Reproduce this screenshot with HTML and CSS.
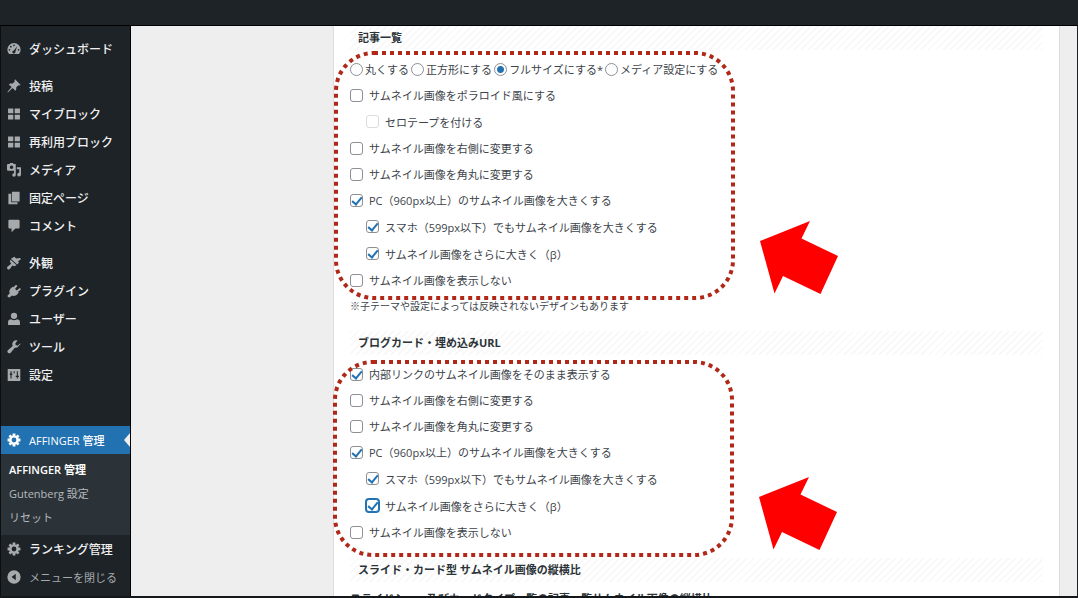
FILE: index.html
```html
<!DOCTYPE html>
<html lang="ja">
<head>
<meta charset="utf-8">
<title>AFFINGER 管理</title>
<link rel="stylesheet" href="styles.css">
</head>
<body>
<header class="topbar"></header>
<div class="shell">
  <nav class="menu">
    <a class="item" href="#"><svg class="icon" viewBox="0 0 20 20"><path fill-rule="evenodd" d="M3 17h14a9.200 9.200 0 0 0 2.500-6A9.500 9.500 0 0 0 .500 11 9.200 9.200 0 0 0 3 17zM10 3.500a1.200 1.200 0 1 1 0 2.400 1.200 1.200 0 0 1 0-2.400zM5.500 5.500a1.200 1.200 0 1 1 0 2.400 1.200 1.200 0 0 1 0-2.400zM3.500 10a1.200 1.200 0 1 1 0 2.400 1.200 1.200 0 0 1 0-2.400zM16.500 10a1.200 1.200 0 1 1 0 2.400 1.200 1.200 0 0 1 0-2.400zM14.600 6l-2.600 7.700a2.200 2.200 0 1 1-2.200-1.600z"/></svg>ダッシュボード</a>
    <hr class="gap">
    <a class="item" href="#"><svg class="icon" viewBox="0 0 20 20"><path d="M11.500.500l8 8-1.800.8-1.400-.3-3.200 3.300c.5 1.800.2 3.400-1.100 4.600L7.900 13 2 18.600l-1.500.900.900-2.100L6.600 11.500 2.500 7.700c1.500-1.200 3.200-1.400 4.900-.9L11 3.800l-.3-1.500z"/></svg>投稿</a>
    <a class="item" href="#"><svg class="icon" viewBox="0 0 20 20"><path d="M1.500 2h7.500v7H1.500zM11 2h7.500v7H11zM1.500 11H9v7H1.500zM11 11h7.500v7H11z"/></svg>マイブロック</a>
    <a class="item" href="#"><svg class="icon" viewBox="0 0 20 20"><path d="M1.500 2h7.500v7H1.500zM11 2h7.500v7H11zM1.500 11H9v7H1.500zM11 11h7.500v7H11z"/></svg>再利用ブロック</a>
    <a class="item" href="#"><svg class="icon" viewBox="0 0 20 20"><path fill-rule="evenodd" d="M1.500 1.500H3.500l1-1.500h4l1 1.500h3V17a2.500 2.500 0 1 1-2.500-2.500V11H1.500A1.500 1.500 0 0 1 0 9.500V3a1.500 1.500 0 0 1 1.500-1.500zM6.500 3.500a2.500 2.500 0 1 0 0 5 2.500 2.500 0 0 0 0-5zM14 6h6v10.500a2.700 2.700 0 1 1-2.500-2.700V9H14z"/></svg>メディア</a>
    <a class="item" href="#"><svg class="icon" viewBox="0 0 20 20"><path d="M7 1h11v14H7zM2 4h4v12h9v3H2z"/></svg>固定ページ</a>
    <a class="item" href="#"><svg class="icon" viewBox="0 0 20 20"><path d="M3.500 1h13A1.500 1.500 0 0 1 18 2.500V12a1.500 1.500 0 0 1-1.500 1.500H12L6.500 19v-5.500h-3A1.500 1.500 0 0 1 2 12V2.500A1.500 1.500 0 0 1 3.500 1z"/></svg>コメント</a>
    <hr class="gap">
    <a class="item" href="#"><svg class="icon" viewBox="0 0 20 20"><path d="M7.500 3l3-2L13 3.500l6-.5.800 1.500L15.800 7.500 17 9.500 14.500 12 5.500 4zM5 5.500l8.500 7.500-2.500 1.500-3.300-.8L4 18.500a2.200 2.200 0 0 1-3.300-3L6 11 4 7.500z"/></svg>外観</a>
    <a class="item" href="#"><svg class="icon" viewBox="0 0 20 20"><path d="M12.500 1.500a1.400 1.400 0 0 1 2 1.800L11.500 7 14 9.200l3.600-3.100a1.400 1.400 0 0 1 1.800 2l-3.600 3.100 1 1-1.200 1.300c-2 3-5.500 4.500-8.500 2.900L4 19H1v-3l2.900-2.300C2.200 10.500 4 7 6.800 5l1.300-1.200 1 1z"/></svg>プラグイン</a>
    <a class="item" href="#"><svg class="icon" viewBox="0 0 20 20"><circle cx="10" cy="5.500" r="4.500"/><path d="M1.500 18.500v-4c0-2.500 2-4 4.500-4 1.800 1.700 6.200 1.700 8 0 2.500 0 4.500 1.500 4.500 4v4z"/></svg>ユーザー</a>
    <a class="item" href="#"><svg class="icon" viewBox="0 0 20 20"><path d="M17.200 8a5.200 5.200 0 0 1-6 3L4.900 18.400a2.600 2.600 0 0 1-3.700-3.600l7-6.400a5.500 5.500 0 0 1 7-7.600L12 4.500l.5 3 3 .5 4-3.500a5.500 5.500 0 0 1-2.300 3.500z"/></svg>ツール</a>
    <a class="item" href="#"><svg class="icon" viewBox="0 0 20 20"><path fill-rule="evenodd" d="M1 1.500h18v17H1zM5 4.500V8H4v2h1v5h1.500v-5h1V8h-1V4.500zM14 4.500V11h-1.500v2H14v2h1.500v-2H17v-2h-1.500V4.500zM9.500 4.500v3h1.500v-3z"/></svg>設定</a>
    <hr class="gap gap-wide">
    <a class="item current" href="#"><svg class="icon" viewBox="0 0 20 20"><path fill-rule="evenodd" d="M19.200 12h-2.700a7 7 0 0 1-.5 1.300l1.800 1.900-2.600 2.600-1.900-1.800a7 7 0 0 1-1.300.5V19.200H8v-2.700a7 7 0 0 1-1.300-.5l-1.900 1.800-2.600-2.600L4 13.300A7 7 0 0 1 3.500 12H.800V8h2.700A7 7 0 0 1 4 6.700L2.200 4.800l2.600-2.600L6.700 4A7 7 0 0 1 8 3.500V.800h4v2.700a7 7 0 0 1 1.300.5l1.900-1.800 2.600 2.600L16 6.700a7 7 0 0 1 .5 1.300h2.700zM10 6.600a3.400 3.400 0 1 0 0 6.800 3.400 3.400 0 0 0 0-6.800z"/></svg>AFFINGER 管理</a>
    <div class="submenu">
      <a class="sub active" href="#">AFFINGER 管理</a>
      <a class="sub" href="#">Gutenberg 設定</a>
      <a class="sub" href="#">リセット</a>
    </div>
    <a class="item" href="#"><svg class="icon" viewBox="0 0 20 20"><path fill-rule="evenodd" d="M19.200 12h-2.700a7 7 0 0 1-.5 1.300l1.800 1.900-2.600 2.600-1.900-1.800a7 7 0 0 1-1.300.5V19.200H8v-2.700a7 7 0 0 1-1.300-.5l-1.900 1.800-2.600-2.600L4 13.300A7 7 0 0 1 3.500 12H.800V8h2.700A7 7 0 0 1 4 6.700L2.200 4.800l2.600-2.600L6.700 4A7 7 0 0 1 8 3.500V.800h4v2.700a7 7 0 0 1 1.300.5l1.900-1.800 2.600 2.600L16 6.700a7 7 0 0 1 .5 1.300h2.700zM10 6.600a3.400 3.400 0 1 0 0 6.800 3.400 3.400 0 0 0 0-6.800z"/></svg>ランキング管理</a>
    <button class="item collapse" type="button"><svg class="icon" viewBox="0 0 20 20"><path fill-rule="evenodd" d="M10 .500a9.500 9.500 0 1 1 0 19 9.500 9.500 0 0 1 0-19zM12.500 5.500L6.500 10l6 4.500z"/></svg>メニューを閉じる</button>
  </nav>
  <main class="content">
    <form class="panel">
      <h2 class="heading">記事一覧</h2>
      <div class="radios">
        <label class="choice"><input type="radio" name="shape">丸くする</label>
        <label class="choice"><input type="radio" name="shape">正方形にする</label>
        <label class="choice"><input type="radio" name="shape" checked>フルサイズにする*</label>
        <label class="choice"><input type="radio" name="shape">メディア設定にする</label>
      </div>
      <label class="row"><input type="checkbox">サムネイル画像をポラロイド風にする</label>
      <label class="row nested"><input type="checkbox" disabled>セロテープを付ける</label>
      <label class="row"><input type="checkbox">サムネイル画像を右側に変更する</label>
      <label class="row"><input type="checkbox">サムネイル画像を角丸に変更する</label>
      <label class="row"><input type="checkbox" checked>PC（960px以上）のサムネイル画像を大きくする</label>
      <label class="row nested"><input type="checkbox" checked>スマホ（599px以下）でもサムネイル画像を大きくする</label>
      <label class="row nested"><input type="checkbox" checked>サムネイル画像をさらに大きく（β）</label>
      <label class="row"><input type="checkbox">サムネイル画像を表示しない</label>
      <p class="note">※子テーマや設定によっては反映されないデザインもあります</p>
      <h2 class="heading">ブログカード・埋め込みURL</h2>
      <div class="group">
        <label class="row"><input type="checkbox" checked>内部リンクのサムネイル画像をそのまま表示する</label>
        <label class="row"><input type="checkbox">サムネイル画像を右側に変更する</label>
        <label class="row"><input type="checkbox">サムネイル画像を角丸に変更する</label>
        <label class="row"><input type="checkbox" checked>PC（960px以上）のサムネイル画像を大きくする</label>
        <label class="row nested"><input type="checkbox" checked>スマホ（599px以下）でもサムネイル画像を大きくする</label>
        <label class="row nested"><input class="focused" type="checkbox" checked>サムネイル画像をさらに大きく（β）</label>
        <label class="row"><input type="checkbox">サムネイル画像を表示しない</label>
      </div>
      <h2 class="heading">スライド・カード型 サムネイル画像の縦横比</h2>
      <p class="lead">スライドショー及びカードタイプ一覧の記事一覧サムネイル画像の縦横比</p>
    </form>
    <svg class="marks" width="520" height="570">
      <rect x="6" y="27" width="397" height="245" rx="38"/>
      <rect x="5" y="336" width="397" height="193" rx="38"/>
      <path d="M430 215l50-20-8.500 17.500L508 230l-17.500 38-37.500-18-8.500 17.500z"/>
      <path d="M429 471l50-20-8.500 17.500L507 486l-17.500 38-37.500-18-8.500 17.500z"/>
    </svg>
  </main>
</div>
<footer class="bottombar"></footer>
</body>
</html>
```
FILE: styles.css
```css
* { box-sizing: border-box; }

body {
  margin: 0;
  height: 100vh;
  display: flex;
  flex-direction: column;
  overflow: hidden;
  background: #1d2327;
  color: #3c434a;
  font-family: "Open Sans", "Noto Sans CJK JP", sans-serif;
  font-size: 11px;
}

.topbar {
  flex: none;
  height: 26px;
  border-bottom: 1px solid #000;
}

.shell {
  flex: 1;
  min-height: 0;
  display: flex;
}

.bottombar {
  flex: none;
  height: 2px;
  background: #14181b;
}

.menu {
  flex: none;
  width: 131px;
  padding-top: 9px;
  border-left: 1px solid #0c0e10;
  border-right: 1px solid #000;
  overflow: hidden;
}

.item {
  position: relative;
  display: flex;
  align-items: center;
  gap: 8px;
  width: 100%;
  height: 28px;
  padding: 0 6px;
  border: 0;
  background: none;
  color: #f0f0f1;
  font: inherit;
  font-size: 12px;
  font-weight: 500;
  text-decoration: none;
  white-space: nowrap;
}

.icon {
  flex: none;
  width: 14px;
  height: 14px;
  fill: #a7aaad;
}

.gap {
  height: 9px;
  margin: 0;
  border: 0;
}

.gap-wide { height: 37px; }

.current {
  background: #2271b1;
  color: #fff;
  font-size: 11px;
}

.current .icon { fill: #fff; }

.current::after {
  content: "";
  position: absolute;
  right: 0;
  top: 7px;
  border: 7px solid transparent;
  border-left-width: 0;
  border-right: 6px solid #f0f0f1;
}

.submenu {
  padding: 4px 0 5px;
  background: #2c3338;
}

.sub {
  display: block;
  padding-left: 8px;
  color: #b4b9be;
  line-height: 24px;
  text-decoration: none;
}

.active {
  color: #fff;
  font-weight: 600;
}

.collapse {
  color: #a7aaad;
  font-size: 11px;
  font-weight: 400;
}

.content {
  position: relative;
  flex: 1;
  min-width: 0;
  padding: 0 17px 0 202px;
  border-right: 1px solid #1d2327;
  background: #eee;
  overflow: hidden;
}

.panel {
  height: 100%;
  padding: 0 16px;
  border: solid #ddd;
  border-width: 0 1px;
  background: #fff;
}

.heading {
  margin: 0;
  padding: 0 8px;
  background: repeating-linear-gradient(135deg, #f9f9f9 0 2px, #fff 2px 5px);
  color: #2c3338;
  font-size: 11px;
  font-weight: 700;
  line-height: 24px;
}

.radios {
  display: flex;
  gap: 2px;
  height: 32px;
  padding-top: 6px;
}

.choice {
  display: flex;
  align-items: center;
  gap: 2px;
  white-space: nowrap;
}

.row {
  display: flex;
  align-items: center;
  gap: 6px;
  height: 26px;
}

.nested {
  height: 27px;
  padding-left: 16px;
}

input {
  flex: none;
  appearance: none;
  width: 13px;
  height: 13px;
  margin: 0;
  border: 1px solid #8c8f94;
  border-radius: 3px;
  background: #fff;
}

input[type="radio"] { border-radius: 50%; }

input[type="radio"]:checked {
  background: radial-gradient(circle, #2271b1 0 3px, #fff 4px);
}

input[type="checkbox"]:checked::before {
  content: "";
  display: block;
  width: 4px;
  height: 8px;
  margin: 0 auto;
  border: solid #2271b1;
  border-width: 0 2px 2px 0;
  rotate: 40deg;
}

input:disabled { border-color: #dcdcde; }

.focused {
  border-color: #2271b1;
  box-shadow: 0 0 0 1px #2271b1;
}

.note {
  margin: 0;
  padding: 4px 0 15px;
  font-size: 10px;
  line-height: 19px;
}

.group { padding: 6px 0 13px; }

.lead {
  margin: 0;
  padding-top: 8px;
  color: #2c3338;
  font-weight: 700;
  line-height: 18px;
  white-space: nowrap;
}

.marks {
  position: absolute;
  left: 199px;
  top: 0;
  fill: #f00;
  pointer-events: none;
}

.marks rect {
  fill: none;
  stroke: #b02818;
  stroke-width: 4px;
  stroke-dasharray: 4 4;
}
```
